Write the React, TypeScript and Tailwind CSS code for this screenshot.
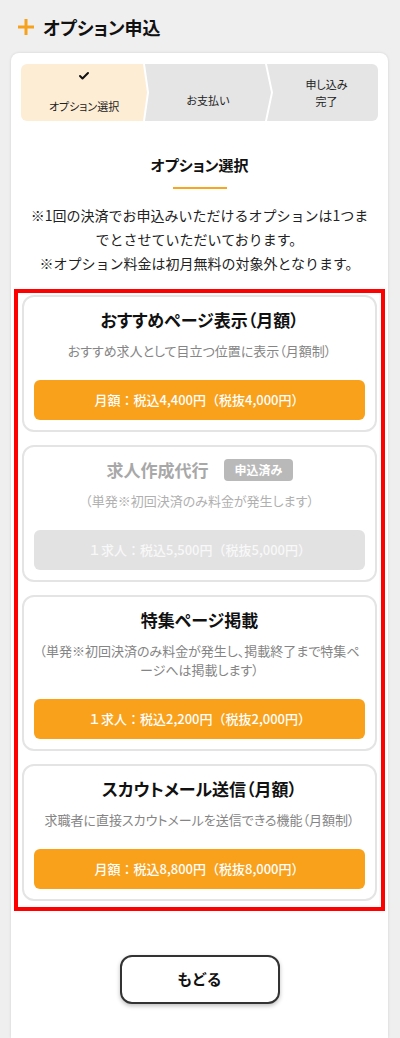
import { Check } from "lucide-react";

const options = [
  {
    title: "おすすめページ表示（月額）",
    desc: "おすすめ求人として目立つ位置に表示（月額制）",
    price: "月額：税込4,400円（税抜4,000円）",
    done: false,
  },
  {
    title: "求人作成代行",
    desc: "（単発※初回決済のみ料金が発生します）",
    price: "１求人：税込5,500円（税抜5,000円）",
    done: true,
  },
  {
    title: "特集ページ掲載",
    desc: "（単発※初回決済のみ料金が発生し、掲載終了まで特集ページへは掲載します）",
    price: "１求人：税込2,200円（税抜2,000円）",
    done: false,
  },
  {
    title: "スカウトメール送信（月額）",
    desc: "求職者に直接スカウトメールを送信できる機能（月額制）",
    price: "月額：税込8,800円（税抜8,000円）",
    done: false,
  },
];

export default function App() {
  return (
    <div className="h-[1038px] overflow-hidden bg-[#efefef] flex flex-col font-['Noto_Sans_CJK_JP','Noto_Sans',sans-serif] text-[#222]">
      <div className="flex items-center h-[26px] mt-[14px] pl-[18px]">
        <svg width="16" height="16" viewBox="0 0 16 16" className="flex-shrink-0">
          <rect x="6.5" y="0" width="3" height="16" fill="#f7a21c" />
          <rect x="0" y="6.5" width="16" height="3" fill="#f7a21c" />
        </svg>
        <h1 className="ml-[9px] text-[18px] font-bold leading-[26px] text-[#111] [font-feature-settings:'palt']">オプション申込</h1>
      </div>

      <div className="flex-1 mt-[13px] ml-[11px] mr-[12px] bg-white rounded-t-lg shadow-[0_0_3px_rgba(0,0,0,0.12)] px-[10px] pt-[11px] flex flex-col">
        {/* stepper */}
        <div className="flex h-[57px] rounded-md overflow-hidden [font-feature-settings:'palt']">
          <div className="w-[126px] bg-[#fdedd5] flex flex-col items-center [clip-path:polygon(0_0,calc(100%-4px)_0,100%_50%,calc(100%-4px)_100%,0_100%)]">
            <Check size={12} strokeWidth={4} className="mt-[6px] text-[#111]" />
            <span className="mt-[17px] text-[11px] leading-[14px]">オプション選択</span>
          </div>
          <div className="w-[126px] -ml-[2px] bg-[#e5e5e5] flex items-center justify-center [clip-path:polygon(0_0,calc(100%-6px)_0,100%_50%,calc(100%-6px)_100%,0_100%,4px_50%)]">
            <span className="text-[11px] leading-[14px] mt-[14px]">お支払い</span>
          </div>
          <div className="flex-1 -ml-[4px] bg-[#e5e5e5] flex flex-col items-center justify-center [clip-path:polygon(0_0,100%_0,100%_100%,0_100%,6px_50%)]">
            <span className="text-[11px] leading-[17px] text-center pl-[8px]">申し込み<br />完了</span>
          </div>
        </div>

        <h2 className="mt-[33px] text-center text-[15px] font-bold leading-[22px] text-[#111] [font-feature-settings:'palt']">オプション選択</h2>
        <div className="mx-auto mt-[11px] w-[54px] h-[2px] bg-[#f8a51f]" />
        <p className="mt-[14px] px-[5px] text-center text-[14px] leading-[24px] text-[#222]">
          ※1回の決済でお申込みいただけるオプションは1つまでとさせていただいております。
          <br />
          ※オプション料金は初月無料の対象外となります。
        </p>

        <div className="-mx-[7px] mt-[14px] border-4 border-[#ff0000] px-[4px] pt-[2px] pb-[6px] flex flex-col gap-[13px]">
          {options.map((o) => (
            <div key={o.title} className="border-2 border-[#e4e4e4] rounded-xl px-[10px] pt-[11px] pb-[10px]">
              <div className="flex items-center justify-center h-[24px]">
                <h3 className={`text-[17px] font-bold leading-[24px] [font-feature-settings:'palt'] ${o.done ? "text-[#a8a8a8]" : "text-[#111]"}`}>{o.title}</h3>
                {o.done && (
                  <span className="ml-[16px] px-[10px] h-[22px] leading-[22px] rounded bg-[#b9b9b9] text-white text-[12px] font-bold">申込済み</span>
                )}
              </div>
              <p className={`mt-[9px] px-[4px] text-center text-[13px] leading-[19px] [font-feature-settings:'palt'] ${o.done ? "text-[#b0b0b0]" : "text-[#858585]"}`}>{o.desc}</p>
              <div className={`mt-[20px] h-[40px] rounded-md flex items-center justify-center text-[13px] font-medium ${o.done ? "bg-[#e2e2e2] text-[#f8f8f8]" : "bg-[#f9a11b] text-white"}`}>
                {o.price}
              </div>
            </div>
          ))}
        </div>

        <button className="mx-auto mt-[44px] w-[160px] h-[49px] rounded-xl border-2 border-[#333] bg-white shadow-[0_2px_4px_rgba(0,0,0,0.25)] text-[15px] font-bold text-[#111]">
          もどる
        </button>
      </div>
    </div>
  );
}
